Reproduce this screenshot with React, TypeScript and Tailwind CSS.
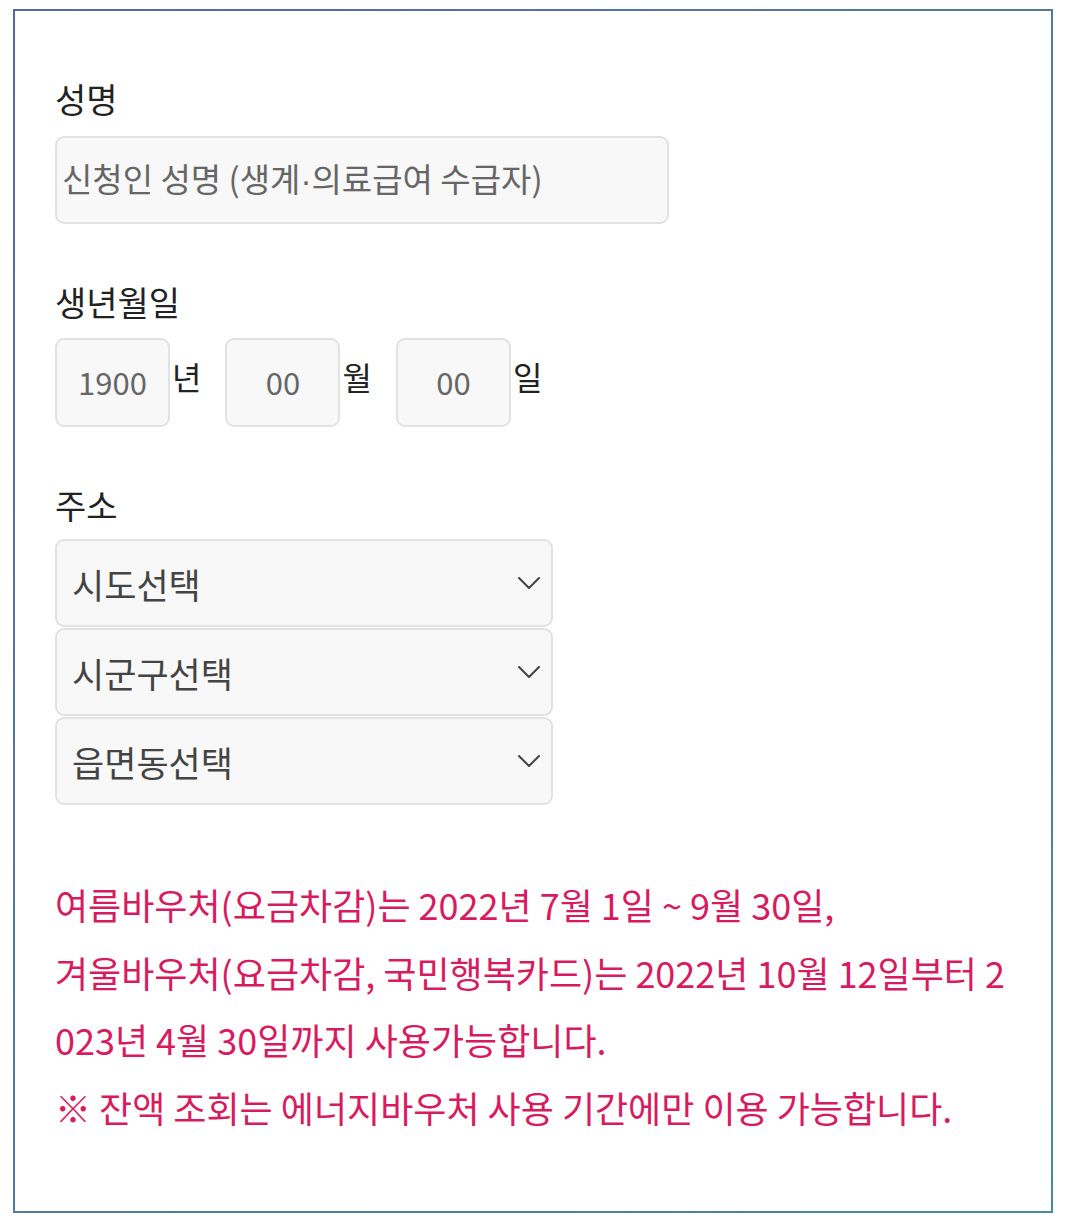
import React from "react";

const font = { fontFamily: '"Noto Sans CJK KR", "Noto Sans", sans-serif' };

function Chevron() {
  return (
    <svg width="22" height="12" viewBox="0 0 22 12" fill="none" className="shrink-0">
      <path d="M1 1l10 10L21 1" stroke="#444" strokeWidth="2" strokeLinecap="round" strokeLinejoin="round" />
    </svg>
  );
}

function SelectBox({ label }: { label: string }) {
  return (
    <div className="flex h-[88px] w-[498px] items-center justify-between rounded-[9px] border-2 border-[#e2e2e2] bg-[#f8f8f8] pl-[15px] pr-[11px]">
      <span className="text-[35px] leading-none text-[#444]">{label}</span>
      <Chevron />
    </div>
  );
}

function DateBox({ value, suffix }: { value: string; suffix: string }) {
  return (
    <div className="flex items-start">
      <div className="flex h-[89px] w-[115px] items-center justify-center rounded-[9px] border-2 border-[#e2e2e2] bg-[#f8f8f8] text-[31px] text-[#666]">
        {value}
      </div>
      <span className="ml-[2px] mt-[14px] text-[32px] leading-[48px] text-[#222]">{suffix}</span>
    </div>
  );
}

function Label({ children, className = "" }: { children: React.ReactNode; className?: string }) {
  return <div className={`text-[34px] leading-[48px] text-[#222] ${className}`}>{children}</div>;
}

export default function App() {
  return (
    <div className="min-h-screen bg-white pl-[13px] pt-[9px]" style={font}>
      <div className="h-[1204px] w-[1040px] bg-gradient-to-br from-[#5a66a4] to-[#468c94] p-[2px]">
        <div className="h-full w-full bg-white pl-[40px] pt-[64px]">
          <Label>성명</Label>
          <div className="mt-[13px] flex h-[88px] w-[614px] items-center rounded-[9px] border-2 border-[#e2e2e2] bg-[#f8f8f8] pl-[5px] text-[33px] text-[#666]">
            <span>
              신청인 성명 (생계<span className="font-['Liberation_Sans']">·</span>의료급여 수급자)
            </span>
          </div>

          <Label className="mt-[54px]">생년월일</Label>
          <div className="mt-[12px] flex gap-[24px]">
            <DateBox value="1900" suffix="년" />
            <DateBox value="00" suffix="월" />
            <DateBox value="00" suffix="일" />
          </div>

          <Label className="mt-[54px]">주소</Label>
          <div className="mt-[10px] flex flex-col gap-[1px]">
            <SelectBox label="시도선택" />
            <SelectBox label="시군구선택" />
            <SelectBox label="읍면동선택" />
          </div>

          <div className="mt-[66px] w-[958px] break-all text-[36px] leading-[67.5px] text-[#d81b60]">
            <p>
              <span className="block">여름바우처(요금차감)는 2022년 7월 1일 ~ 9월 30일,</span>
              겨울바우처(요금차감, 국민행복카드)는 2022년 10월 12일부터 2023년 4월 30일까지 사용가능합니다.
            </p>
            <p>※ 잔액 조회는 에너지바우처 사용 기간에만 이용 가능합니다.</p>
          </div>
        </div>
      </div>
    </div>
  );
}
